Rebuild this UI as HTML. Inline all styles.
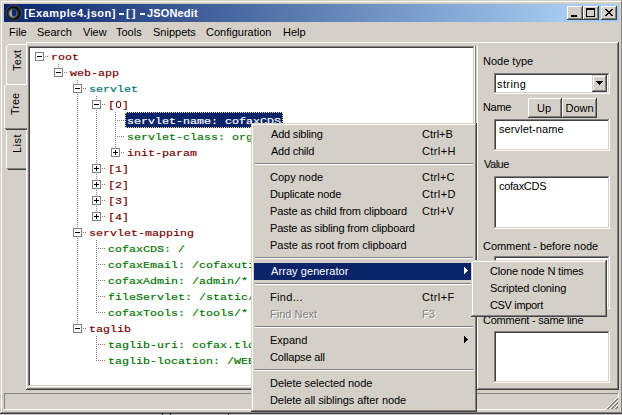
<!DOCTYPE html>
<html><head><meta charset="utf-8"><style>
html,body{margin:0;padding:0;width:622px;height:415px;overflow:hidden;background:#d4d0c8}
div,svg{position:absolute}
.t{font-family:"Liberation Sans",sans-serif;font-size:11px;line-height:13px;white-space:nowrap;color:#000}
.c{text-align:center}
.tt{font-family:"Liberation Sans",sans-serif;font-size:11px;font-weight:bold;line-height:13px;white-space:nowrap;color:#fff}
.m{font-family:"Liberation Mono",monospace;font-size:11.667px;letter-spacing:0px;font-weight:normal;-webkit-text-stroke:0.2px currentColor;line-height:16px;white-space:nowrap;transform:scaleY(0.84);transform-origin:0 11px}
.vt{font-family:"Liberation Sans",sans-serif;font-size:11px;line-height:13px;white-space:nowrap;color:#000;transform-origin:0 0;transform:rotate(-90deg)}
</style></head><body>
<div style="left:0px;top:0px;width:622px;height:415px;background:#d4d0c8;"></div><div style="left:0px;top:0px;width:621px;height:1px;background:#d4d0c8;"></div><div style="left:0px;top:0px;width:1px;height:413px;background:#d4d0c8;"></div><div style="left:1px;top:1px;width:620px;height:1px;background:#ffffff;"></div><div style="left:1px;top:1px;width:1px;height:411px;background:#ffffff;"></div><div style="left:0px;top:414px;width:622px;height:1px;background:#c8c8c8;"></div><div style="left:162px;top:414px;width:1px;height:1px;background:#000;"></div><div style="left:170px;top:414px;width:1px;height:1px;background:#000;"></div><div style="left:228px;top:414px;width:1px;height:1px;background:#000;"></div><div style="left:621px;top:0px;width:1px;height:414px;background:#808080;"></div><div style="left:0px;top:413px;width:622px;height:1px;background:#404040;"></div><div style="left:1px;top:412px;width:620px;height:1px;background:#808080;"></div><div style="left:4px;top:4px;width:615px;height:18px;background:linear-gradient(to right,#0a246a 0px,#a6caf0 563px,#a6caf0 615px);"></div><svg style="left:6px;top:5px" width="16" height="16" viewBox="0 0 16 16"><defs><radialGradient id="rg" gradientUnits="userSpaceOnUse" cx="7" cy="8.4" r="7.2"><stop offset="0" stop-color="#d0d0d0"/><stop offset="0.4" stop-color="#a8a8a8"/><stop offset="0.65" stop-color="#383838"/><stop offset="0.88" stop-color="#080808"/><stop offset="1" stop-color="#202020"/></radialGradient></defs><circle cx="8" cy="8" r="7.6" fill="none" stroke="#7a7a7a" stroke-width="0.6"/><path fill-rule="evenodd" fill="url(#rg)" d="M8 0.5A7.5 7.5 0 1 0 8 15.5A7.5 7.5 0 1 0 8 0.5ZM8.1 4A2.4 3.8 0 1 1 8.1 11.6A2.4 3.8 0 1 1 8.1 4Z"/></svg><div class="tt" style="left:24px;top:7px;letter-spacing:0.5px">[Example4.json]</div><div style="left:119px;top:13px;width:5px;height:2px;background:#fff;"></div><div style="left:140px;top:13px;width:5px;height:2px;background:#fff;"></div><div class="tt" style="left:126px;top:7px;letter-spacing:2px">[]</div><div class="tt" style="left:147px;top:7px;letter-spacing:0.15px">JSONedit</div><div style="left:567px;top:6px;width:16px;height:14px;background:#d4d0c8;"></div><div style="left:567px;top:6px;width:16px;height:1px;background:#ffffff;"></div><div style="left:567px;top:6px;width:1px;height:14px;background:#ffffff;"></div><div style="left:567px;top:19px;width:16px;height:1px;background:#404040;"></div><div style="left:582px;top:6px;width:1px;height:14px;background:#404040;"></div><div style="left:568px;top:18px;width:14px;height:1px;background:#808080;"></div><div style="left:581px;top:7px;width:1px;height:12px;background:#808080;"></div><div style="left:583px;top:6px;width:16px;height:14px;background:#d4d0c8;"></div><div style="left:583px;top:6px;width:16px;height:1px;background:#ffffff;"></div><div style="left:583px;top:6px;width:1px;height:14px;background:#ffffff;"></div><div style="left:583px;top:19px;width:16px;height:1px;background:#404040;"></div><div style="left:598px;top:6px;width:1px;height:14px;background:#404040;"></div><div style="left:584px;top:18px;width:14px;height:1px;background:#808080;"></div><div style="left:597px;top:7px;width:1px;height:12px;background:#808080;"></div><div style="left:601px;top:6px;width:16px;height:14px;background:#d4d0c8;"></div><div style="left:601px;top:6px;width:16px;height:1px;background:#ffffff;"></div><div style="left:601px;top:6px;width:1px;height:14px;background:#ffffff;"></div><div style="left:601px;top:19px;width:16px;height:1px;background:#404040;"></div><div style="left:616px;top:6px;width:1px;height:14px;background:#404040;"></div><div style="left:602px;top:18px;width:14px;height:1px;background:#808080;"></div><div style="left:615px;top:7px;width:1px;height:12px;background:#808080;"></div><div style="left:571px;top:15px;width:6px;height:2px;background:#000;"></div><div style="left:586px;top:8px;width:9px;height:9px;background:transparent;border:1px solid #000;border-top-width:2px;box-sizing:border-box"></div><div style="left:605px;top:9px;width:1px;height:1px;background:#000;"></div><div style="left:606px;top:9px;width:1px;height:1px;background:#000;"></div><div style="left:611px;top:9px;width:1px;height:1px;background:#000;"></div><div style="left:612px;top:9px;width:1px;height:1px;background:#000;"></div><div style="left:606px;top:10px;width:1px;height:1px;background:#000;"></div><div style="left:607px;top:10px;width:1px;height:1px;background:#000;"></div><div style="left:610px;top:10px;width:1px;height:1px;background:#000;"></div><div style="left:611px;top:10px;width:1px;height:1px;background:#000;"></div><div style="left:607px;top:11px;width:1px;height:1px;background:#000;"></div><div style="left:608px;top:11px;width:1px;height:1px;background:#000;"></div><div style="left:609px;top:11px;width:1px;height:1px;background:#000;"></div><div style="left:610px;top:11px;width:1px;height:1px;background:#000;"></div><div style="left:608px;top:12px;width:1px;height:1px;background:#000;"></div><div style="left:609px;top:12px;width:1px;height:1px;background:#000;"></div><div style="left:607px;top:13px;width:1px;height:1px;background:#000;"></div><div style="left:608px;top:13px;width:1px;height:1px;background:#000;"></div><div style="left:609px;top:13px;width:1px;height:1px;background:#000;"></div><div style="left:610px;top:13px;width:1px;height:1px;background:#000;"></div><div style="left:606px;top:14px;width:1px;height:1px;background:#000;"></div><div style="left:607px;top:14px;width:1px;height:1px;background:#000;"></div><div style="left:610px;top:14px;width:1px;height:1px;background:#000;"></div><div style="left:611px;top:14px;width:1px;height:1px;background:#000;"></div><div style="left:605px;top:15px;width:1px;height:1px;background:#000;"></div><div style="left:606px;top:15px;width:1px;height:1px;background:#000;"></div><div style="left:611px;top:15px;width:1px;height:1px;background:#000;"></div><div style="left:612px;top:15px;width:1px;height:1px;background:#000;"></div><div class="t" style="left:9px;top:26px;">File</div><div class="t" style="left:37px;top:26px;">Search</div><div class="t" style="left:83px;top:26px;">View</div><div class="t" style="left:116px;top:26px;">Tools</div><div class="t" style="left:153px;top:26px;">Snippets</div><div class="t" style="left:206px;top:26px;">Configuration</div><div class="t" style="left:283px;top:26px;">Help</div><div style="left:26px;top:42px;width:592px;height:1px;background:#ffffff;"></div><div style="left:26px;top:42px;width:1px;height:347px;background:#ffffff;"></div><div style="left:617px;top:43px;width:1px;height:346px;background:#808080;"></div><div style="left:618px;top:42px;width:1px;height:348px;background:#404040;"></div><div style="left:27px;top:388px;width:591px;height:1px;background:#808080;"></div><div style="left:26px;top:389px;width:593px;height:1px;background:#404040;"></div><div style="left:6px;top:44px;width:20px;height:42px;background:#d4d0c8;"></div><div style="left:8px;top:44px;width:18px;height:1px;background:#ffffff;"></div><div style="left:7px;top:45px;width:1px;height:1px;background:#ffffff;"></div><div style="left:6px;top:46px;width:1px;height:38px;background:#ffffff;"></div><div style="left:8px;top:84px;width:18px;height:1px;background:#808080;"></div><div style="left:8px;top:85px;width:18px;height:1px;background:#404040;"></div><div style="left:7px;top:84px;width:1px;height:1px;background:#808080;"></div><div style="left:6px;top:128px;width:20px;height:42px;background:#d4d0c8;"></div><div style="left:8px;top:128px;width:18px;height:1px;background:#ffffff;"></div><div style="left:7px;top:129px;width:1px;height:1px;background:#ffffff;"></div><div style="left:6px;top:130px;width:1px;height:38px;background:#ffffff;"></div><div style="left:8px;top:168px;width:18px;height:1px;background:#808080;"></div><div style="left:8px;top:169px;width:18px;height:1px;background:#404040;"></div><div style="left:7px;top:168px;width:1px;height:1px;background:#808080;"></div><div style="left:4px;top:84px;width:23px;height:46px;background:#d4d0c8;"></div><div style="left:6px;top:84px;width:20px;height:1px;background:#ffffff;"></div><div style="left:5px;top:85px;width:1px;height:1px;background:#ffffff;"></div><div style="left:4px;top:86px;width:1px;height:42px;background:#ffffff;"></div><div style="left:6px;top:128px;width:21px;height:1px;background:#808080;"></div><div style="left:6px;top:129px;width:21px;height:1px;background:#404040;"></div><div style="left:5px;top:128px;width:1px;height:1px;background:#808080;"></div><div style="left:26px;top:85px;width:1px;height:43px;background:#d4d0c8;"></div><div class="vt" style="left:11px;top:71px;letter-spacing:0.3px">Text</div><div class="vt" style="left:9px;top:115px">Tree</div><div class="vt" style="left:11px;top:153px;letter-spacing:0.5px">List</div><div style="left:28px;top:46px;width:447px;height:341px;background:#ffffff;"></div><div style="left:28px;top:46px;width:447px;height:1px;background:#808080;"></div><div style="left:28px;top:46px;width:1px;height:341px;background:#808080;"></div><div style="left:29px;top:47px;width:445px;height:1px;background:#404040;"></div><div style="left:29px;top:47px;width:1px;height:339px;background:#404040;"></div><div style="left:28px;top:386px;width:447px;height:1px;background:#ffffff;"></div><div style="left:474px;top:46px;width:1px;height:341px;background:#ffffff;"></div><div style="left:29px;top:385px;width:445px;height:1px;background:#d4d0c8;"></div><div style="left:473px;top:47px;width:1px;height:339px;background:#d4d0c8;"></div><div style="left:475px;top:46px;width:1px;height:343px;background:#808080;"></div><div style="left:477px;top:46px;width:1px;height:343px;background:#ffffff;"></div><div style="left:30px;top:48px;width:443px;height:337px;overflow:hidden"><div style="left:-30px;top:-48px;width:622px;height:415px"><div style="left:39px;top:56px;width:1px;height:1px;background:#808080"></div><div style="left:41px;top:56px;width:1px;height:1px;background:#808080"></div><div style="left:43px;top:56px;width:1px;height:1px;background:#808080"></div><div style="left:45px;top:56px;width:1px;height:1px;background:#808080"></div><div style="left:47px;top:56px;width:1px;height:1px;background:#808080"></div><div style="left:58px;top:72px;width:1px;height:1px;background:#808080"></div><div style="left:60px;top:72px;width:1px;height:1px;background:#808080"></div><div style="left:62px;top:72px;width:1px;height:1px;background:#808080"></div><div style="left:64px;top:72px;width:1px;height:1px;background:#808080"></div><div style="left:66px;top:72px;width:1px;height:1px;background:#808080"></div><div style="left:58px;top:64px;width:1px;height:1px;background:#808080"></div><div style="left:58px;top:66px;width:1px;height:1px;background:#808080"></div><div style="left:58px;top:68px;width:1px;height:1px;background:#808080"></div><div style="left:58px;top:70px;width:1px;height:1px;background:#808080"></div><div style="left:58px;top:72px;width:1px;height:1px;background:#808080"></div><div style="left:77px;top:88px;width:1px;height:1px;background:#808080"></div><div style="left:79px;top:88px;width:1px;height:1px;background:#808080"></div><div style="left:81px;top:88px;width:1px;height:1px;background:#808080"></div><div style="left:83px;top:88px;width:1px;height:1px;background:#808080"></div><div style="left:85px;top:88px;width:1px;height:1px;background:#808080"></div><div style="left:77px;top:80px;width:1px;height:1px;background:#808080"></div><div style="left:77px;top:82px;width:1px;height:1px;background:#808080"></div><div style="left:77px;top:84px;width:1px;height:1px;background:#808080"></div><div style="left:77px;top:86px;width:1px;height:1px;background:#808080"></div><div style="left:77px;top:88px;width:1px;height:1px;background:#808080"></div><div style="left:77px;top:90px;width:1px;height:1px;background:#808080"></div><div style="left:77px;top:92px;width:1px;height:1px;background:#808080"></div><div style="left:77px;top:94px;width:1px;height:1px;background:#808080"></div><div style="left:96px;top:104px;width:1px;height:1px;background:#808080"></div><div style="left:98px;top:104px;width:1px;height:1px;background:#808080"></div><div style="left:100px;top:104px;width:1px;height:1px;background:#808080"></div><div style="left:102px;top:104px;width:1px;height:1px;background:#808080"></div><div style="left:104px;top:104px;width:1px;height:1px;background:#808080"></div><div style="left:96px;top:96px;width:1px;height:1px;background:#808080"></div><div style="left:96px;top:98px;width:1px;height:1px;background:#808080"></div><div style="left:96px;top:100px;width:1px;height:1px;background:#808080"></div><div style="left:96px;top:102px;width:1px;height:1px;background:#808080"></div><div style="left:96px;top:104px;width:1px;height:1px;background:#808080"></div><div style="left:96px;top:106px;width:1px;height:1px;background:#808080"></div><div style="left:96px;top:108px;width:1px;height:1px;background:#808080"></div><div style="left:96px;top:110px;width:1px;height:1px;background:#808080"></div><div style="left:77px;top:96px;width:1px;height:1px;background:#808080"></div><div style="left:77px;top:98px;width:1px;height:1px;background:#808080"></div><div style="left:77px;top:100px;width:1px;height:1px;background:#808080"></div><div style="left:77px;top:102px;width:1px;height:1px;background:#808080"></div><div style="left:77px;top:104px;width:1px;height:1px;background:#808080"></div><div style="left:77px;top:106px;width:1px;height:1px;background:#808080"></div><div style="left:77px;top:108px;width:1px;height:1px;background:#808080"></div><div style="left:77px;top:110px;width:1px;height:1px;background:#808080"></div><div style="left:115px;top:120px;width:1px;height:1px;background:#808080"></div><div style="left:117px;top:120px;width:1px;height:1px;background:#808080"></div><div style="left:119px;top:120px;width:1px;height:1px;background:#808080"></div><div style="left:121px;top:120px;width:1px;height:1px;background:#808080"></div><div style="left:123px;top:120px;width:1px;height:1px;background:#808080"></div><div style="left:115px;top:112px;width:1px;height:1px;background:#808080"></div><div style="left:115px;top:114px;width:1px;height:1px;background:#808080"></div><div style="left:115px;top:116px;width:1px;height:1px;background:#808080"></div><div style="left:115px;top:118px;width:1px;height:1px;background:#808080"></div><div style="left:115px;top:120px;width:1px;height:1px;background:#808080"></div><div style="left:115px;top:122px;width:1px;height:1px;background:#808080"></div><div style="left:115px;top:124px;width:1px;height:1px;background:#808080"></div><div style="left:115px;top:126px;width:1px;height:1px;background:#808080"></div><div style="left:77px;top:112px;width:1px;height:1px;background:#808080"></div><div style="left:77px;top:114px;width:1px;height:1px;background:#808080"></div><div style="left:77px;top:116px;width:1px;height:1px;background:#808080"></div><div style="left:77px;top:118px;width:1px;height:1px;background:#808080"></div><div style="left:77px;top:120px;width:1px;height:1px;background:#808080"></div><div style="left:77px;top:122px;width:1px;height:1px;background:#808080"></div><div style="left:77px;top:124px;width:1px;height:1px;background:#808080"></div><div style="left:77px;top:126px;width:1px;height:1px;background:#808080"></div><div style="left:96px;top:112px;width:1px;height:1px;background:#808080"></div><div style="left:96px;top:114px;width:1px;height:1px;background:#808080"></div><div style="left:96px;top:116px;width:1px;height:1px;background:#808080"></div><div style="left:96px;top:118px;width:1px;height:1px;background:#808080"></div><div style="left:96px;top:120px;width:1px;height:1px;background:#808080"></div><div style="left:96px;top:122px;width:1px;height:1px;background:#808080"></div><div style="left:96px;top:124px;width:1px;height:1px;background:#808080"></div><div style="left:96px;top:126px;width:1px;height:1px;background:#808080"></div><div style="left:115px;top:136px;width:1px;height:1px;background:#808080"></div><div style="left:117px;top:136px;width:1px;height:1px;background:#808080"></div><div style="left:119px;top:136px;width:1px;height:1px;background:#808080"></div><div style="left:121px;top:136px;width:1px;height:1px;background:#808080"></div><div style="left:123px;top:136px;width:1px;height:1px;background:#808080"></div><div style="left:115px;top:128px;width:1px;height:1px;background:#808080"></div><div style="left:115px;top:130px;width:1px;height:1px;background:#808080"></div><div style="left:115px;top:132px;width:1px;height:1px;background:#808080"></div><div style="left:115px;top:134px;width:1px;height:1px;background:#808080"></div><div style="left:115px;top:136px;width:1px;height:1px;background:#808080"></div><div style="left:115px;top:138px;width:1px;height:1px;background:#808080"></div><div style="left:115px;top:140px;width:1px;height:1px;background:#808080"></div><div style="left:115px;top:142px;width:1px;height:1px;background:#808080"></div><div style="left:77px;top:128px;width:1px;height:1px;background:#808080"></div><div style="left:77px;top:130px;width:1px;height:1px;background:#808080"></div><div style="left:77px;top:132px;width:1px;height:1px;background:#808080"></div><div style="left:77px;top:134px;width:1px;height:1px;background:#808080"></div><div style="left:77px;top:136px;width:1px;height:1px;background:#808080"></div><div style="left:77px;top:138px;width:1px;height:1px;background:#808080"></div><div style="left:77px;top:140px;width:1px;height:1px;background:#808080"></div><div style="left:77px;top:142px;width:1px;height:1px;background:#808080"></div><div style="left:96px;top:128px;width:1px;height:1px;background:#808080"></div><div style="left:96px;top:130px;width:1px;height:1px;background:#808080"></div><div style="left:96px;top:132px;width:1px;height:1px;background:#808080"></div><div style="left:96px;top:134px;width:1px;height:1px;background:#808080"></div><div style="left:96px;top:136px;width:1px;height:1px;background:#808080"></div><div style="left:96px;top:138px;width:1px;height:1px;background:#808080"></div><div style="left:96px;top:140px;width:1px;height:1px;background:#808080"></div><div style="left:96px;top:142px;width:1px;height:1px;background:#808080"></div><div style="left:115px;top:152px;width:1px;height:1px;background:#808080"></div><div style="left:117px;top:152px;width:1px;height:1px;background:#808080"></div><div style="left:119px;top:152px;width:1px;height:1px;background:#808080"></div><div style="left:121px;top:152px;width:1px;height:1px;background:#808080"></div><div style="left:123px;top:152px;width:1px;height:1px;background:#808080"></div><div style="left:115px;top:144px;width:1px;height:1px;background:#808080"></div><div style="left:115px;top:146px;width:1px;height:1px;background:#808080"></div><div style="left:115px;top:148px;width:1px;height:1px;background:#808080"></div><div style="left:115px;top:150px;width:1px;height:1px;background:#808080"></div><div style="left:115px;top:152px;width:1px;height:1px;background:#808080"></div><div style="left:77px;top:144px;width:1px;height:1px;background:#808080"></div><div style="left:77px;top:146px;width:1px;height:1px;background:#808080"></div><div style="left:77px;top:148px;width:1px;height:1px;background:#808080"></div><div style="left:77px;top:150px;width:1px;height:1px;background:#808080"></div><div style="left:77px;top:152px;width:1px;height:1px;background:#808080"></div><div style="left:77px;top:154px;width:1px;height:1px;background:#808080"></div><div style="left:77px;top:156px;width:1px;height:1px;background:#808080"></div><div style="left:77px;top:158px;width:1px;height:1px;background:#808080"></div><div style="left:96px;top:144px;width:1px;height:1px;background:#808080"></div><div style="left:96px;top:146px;width:1px;height:1px;background:#808080"></div><div style="left:96px;top:148px;width:1px;height:1px;background:#808080"></div><div style="left:96px;top:150px;width:1px;height:1px;background:#808080"></div><div style="left:96px;top:152px;width:1px;height:1px;background:#808080"></div><div style="left:96px;top:154px;width:1px;height:1px;background:#808080"></div><div style="left:96px;top:156px;width:1px;height:1px;background:#808080"></div><div style="left:96px;top:158px;width:1px;height:1px;background:#808080"></div><div style="left:96px;top:168px;width:1px;height:1px;background:#808080"></div><div style="left:98px;top:168px;width:1px;height:1px;background:#808080"></div><div style="left:100px;top:168px;width:1px;height:1px;background:#808080"></div><div style="left:102px;top:168px;width:1px;height:1px;background:#808080"></div><div style="left:104px;top:168px;width:1px;height:1px;background:#808080"></div><div style="left:96px;top:160px;width:1px;height:1px;background:#808080"></div><div style="left:96px;top:162px;width:1px;height:1px;background:#808080"></div><div style="left:96px;top:164px;width:1px;height:1px;background:#808080"></div><div style="left:96px;top:166px;width:1px;height:1px;background:#808080"></div><div style="left:96px;top:168px;width:1px;height:1px;background:#808080"></div><div style="left:96px;top:170px;width:1px;height:1px;background:#808080"></div><div style="left:96px;top:172px;width:1px;height:1px;background:#808080"></div><div style="left:96px;top:174px;width:1px;height:1px;background:#808080"></div><div style="left:77px;top:160px;width:1px;height:1px;background:#808080"></div><div style="left:77px;top:162px;width:1px;height:1px;background:#808080"></div><div style="left:77px;top:164px;width:1px;height:1px;background:#808080"></div><div style="left:77px;top:166px;width:1px;height:1px;background:#808080"></div><div style="left:77px;top:168px;width:1px;height:1px;background:#808080"></div><div style="left:77px;top:170px;width:1px;height:1px;background:#808080"></div><div style="left:77px;top:172px;width:1px;height:1px;background:#808080"></div><div style="left:77px;top:174px;width:1px;height:1px;background:#808080"></div><div style="left:96px;top:184px;width:1px;height:1px;background:#808080"></div><div style="left:98px;top:184px;width:1px;height:1px;background:#808080"></div><div style="left:100px;top:184px;width:1px;height:1px;background:#808080"></div><div style="left:102px;top:184px;width:1px;height:1px;background:#808080"></div><div style="left:104px;top:184px;width:1px;height:1px;background:#808080"></div><div style="left:96px;top:176px;width:1px;height:1px;background:#808080"></div><div style="left:96px;top:178px;width:1px;height:1px;background:#808080"></div><div style="left:96px;top:180px;width:1px;height:1px;background:#808080"></div><div style="left:96px;top:182px;width:1px;height:1px;background:#808080"></div><div style="left:96px;top:184px;width:1px;height:1px;background:#808080"></div><div style="left:96px;top:186px;width:1px;height:1px;background:#808080"></div><div style="left:96px;top:188px;width:1px;height:1px;background:#808080"></div><div style="left:96px;top:190px;width:1px;height:1px;background:#808080"></div><div style="left:77px;top:176px;width:1px;height:1px;background:#808080"></div><div style="left:77px;top:178px;width:1px;height:1px;background:#808080"></div><div style="left:77px;top:180px;width:1px;height:1px;background:#808080"></div><div style="left:77px;top:182px;width:1px;height:1px;background:#808080"></div><div style="left:77px;top:184px;width:1px;height:1px;background:#808080"></div><div style="left:77px;top:186px;width:1px;height:1px;background:#808080"></div><div style="left:77px;top:188px;width:1px;height:1px;background:#808080"></div><div style="left:77px;top:190px;width:1px;height:1px;background:#808080"></div><div style="left:96px;top:200px;width:1px;height:1px;background:#808080"></div><div style="left:98px;top:200px;width:1px;height:1px;background:#808080"></div><div style="left:100px;top:200px;width:1px;height:1px;background:#808080"></div><div style="left:102px;top:200px;width:1px;height:1px;background:#808080"></div><div style="left:104px;top:200px;width:1px;height:1px;background:#808080"></div><div style="left:96px;top:192px;width:1px;height:1px;background:#808080"></div><div style="left:96px;top:194px;width:1px;height:1px;background:#808080"></div><div style="left:96px;top:196px;width:1px;height:1px;background:#808080"></div><div style="left:96px;top:198px;width:1px;height:1px;background:#808080"></div><div style="left:96px;top:200px;width:1px;height:1px;background:#808080"></div><div style="left:96px;top:202px;width:1px;height:1px;background:#808080"></div><div style="left:96px;top:204px;width:1px;height:1px;background:#808080"></div><div style="left:96px;top:206px;width:1px;height:1px;background:#808080"></div><div style="left:77px;top:192px;width:1px;height:1px;background:#808080"></div><div style="left:77px;top:194px;width:1px;height:1px;background:#808080"></div><div style="left:77px;top:196px;width:1px;height:1px;background:#808080"></div><div style="left:77px;top:198px;width:1px;height:1px;background:#808080"></div><div style="left:77px;top:200px;width:1px;height:1px;background:#808080"></div><div style="left:77px;top:202px;width:1px;height:1px;background:#808080"></div><div style="left:77px;top:204px;width:1px;height:1px;background:#808080"></div><div style="left:77px;top:206px;width:1px;height:1px;background:#808080"></div><div style="left:96px;top:216px;width:1px;height:1px;background:#808080"></div><div style="left:98px;top:216px;width:1px;height:1px;background:#808080"></div><div style="left:100px;top:216px;width:1px;height:1px;background:#808080"></div><div style="left:102px;top:216px;width:1px;height:1px;background:#808080"></div><div style="left:104px;top:216px;width:1px;height:1px;background:#808080"></div><div style="left:96px;top:208px;width:1px;height:1px;background:#808080"></div><div style="left:96px;top:210px;width:1px;height:1px;background:#808080"></div><div style="left:96px;top:212px;width:1px;height:1px;background:#808080"></div><div style="left:96px;top:214px;width:1px;height:1px;background:#808080"></div><div style="left:96px;top:216px;width:1px;height:1px;background:#808080"></div><div style="left:77px;top:208px;width:1px;height:1px;background:#808080"></div><div style="left:77px;top:210px;width:1px;height:1px;background:#808080"></div><div style="left:77px;top:212px;width:1px;height:1px;background:#808080"></div><div style="left:77px;top:214px;width:1px;height:1px;background:#808080"></div><div style="left:77px;top:216px;width:1px;height:1px;background:#808080"></div><div style="left:77px;top:218px;width:1px;height:1px;background:#808080"></div><div style="left:77px;top:220px;width:1px;height:1px;background:#808080"></div><div style="left:77px;top:222px;width:1px;height:1px;background:#808080"></div><div style="left:77px;top:232px;width:1px;height:1px;background:#808080"></div><div style="left:79px;top:232px;width:1px;height:1px;background:#808080"></div><div style="left:81px;top:232px;width:1px;height:1px;background:#808080"></div><div style="left:83px;top:232px;width:1px;height:1px;background:#808080"></div><div style="left:85px;top:232px;width:1px;height:1px;background:#808080"></div><div style="left:77px;top:224px;width:1px;height:1px;background:#808080"></div><div style="left:77px;top:226px;width:1px;height:1px;background:#808080"></div><div style="left:77px;top:228px;width:1px;height:1px;background:#808080"></div><div style="left:77px;top:230px;width:1px;height:1px;background:#808080"></div><div style="left:77px;top:232px;width:1px;height:1px;background:#808080"></div><div style="left:77px;top:234px;width:1px;height:1px;background:#808080"></div><div style="left:77px;top:236px;width:1px;height:1px;background:#808080"></div><div style="left:77px;top:238px;width:1px;height:1px;background:#808080"></div><div style="left:96px;top:248px;width:1px;height:1px;background:#808080"></div><div style="left:98px;top:248px;width:1px;height:1px;background:#808080"></div><div style="left:100px;top:248px;width:1px;height:1px;background:#808080"></div><div style="left:102px;top:248px;width:1px;height:1px;background:#808080"></div><div style="left:104px;top:248px;width:1px;height:1px;background:#808080"></div><div style="left:96px;top:240px;width:1px;height:1px;background:#808080"></div><div style="left:96px;top:242px;width:1px;height:1px;background:#808080"></div><div style="left:96px;top:244px;width:1px;height:1px;background:#808080"></div><div style="left:96px;top:246px;width:1px;height:1px;background:#808080"></div><div style="left:96px;top:248px;width:1px;height:1px;background:#808080"></div><div style="left:96px;top:250px;width:1px;height:1px;background:#808080"></div><div style="left:96px;top:252px;width:1px;height:1px;background:#808080"></div><div style="left:96px;top:254px;width:1px;height:1px;background:#808080"></div><div style="left:77px;top:240px;width:1px;height:1px;background:#808080"></div><div style="left:77px;top:242px;width:1px;height:1px;background:#808080"></div><div style="left:77px;top:244px;width:1px;height:1px;background:#808080"></div><div style="left:77px;top:246px;width:1px;height:1px;background:#808080"></div><div style="left:77px;top:248px;width:1px;height:1px;background:#808080"></div><div style="left:77px;top:250px;width:1px;height:1px;background:#808080"></div><div style="left:77px;top:252px;width:1px;height:1px;background:#808080"></div><div style="left:77px;top:254px;width:1px;height:1px;background:#808080"></div><div style="left:96px;top:264px;width:1px;height:1px;background:#808080"></div><div style="left:98px;top:264px;width:1px;height:1px;background:#808080"></div><div style="left:100px;top:264px;width:1px;height:1px;background:#808080"></div><div style="left:102px;top:264px;width:1px;height:1px;background:#808080"></div><div style="left:104px;top:264px;width:1px;height:1px;background:#808080"></div><div style="left:96px;top:256px;width:1px;height:1px;background:#808080"></div><div style="left:96px;top:258px;width:1px;height:1px;background:#808080"></div><div style="left:96px;top:260px;width:1px;height:1px;background:#808080"></div><div style="left:96px;top:262px;width:1px;height:1px;background:#808080"></div><div style="left:96px;top:264px;width:1px;height:1px;background:#808080"></div><div style="left:96px;top:266px;width:1px;height:1px;background:#808080"></div><div style="left:96px;top:268px;width:1px;height:1px;background:#808080"></div><div style="left:96px;top:270px;width:1px;height:1px;background:#808080"></div><div style="left:77px;top:256px;width:1px;height:1px;background:#808080"></div><div style="left:77px;top:258px;width:1px;height:1px;background:#808080"></div><div style="left:77px;top:260px;width:1px;height:1px;background:#808080"></div><div style="left:77px;top:262px;width:1px;height:1px;background:#808080"></div><div style="left:77px;top:264px;width:1px;height:1px;background:#808080"></div><div style="left:77px;top:266px;width:1px;height:1px;background:#808080"></div><div style="left:77px;top:268px;width:1px;height:1px;background:#808080"></div><div style="left:77px;top:270px;width:1px;height:1px;background:#808080"></div><div style="left:96px;top:280px;width:1px;height:1px;background:#808080"></div><div style="left:98px;top:280px;width:1px;height:1px;background:#808080"></div><div style="left:100px;top:280px;width:1px;height:1px;background:#808080"></div><div style="left:102px;top:280px;width:1px;height:1px;background:#808080"></div><div style="left:104px;top:280px;width:1px;height:1px;background:#808080"></div><div style="left:96px;top:272px;width:1px;height:1px;background:#808080"></div><div style="left:96px;top:274px;width:1px;height:1px;background:#808080"></div><div style="left:96px;top:276px;width:1px;height:1px;background:#808080"></div><div style="left:96px;top:278px;width:1px;height:1px;background:#808080"></div><div style="left:96px;top:280px;width:1px;height:1px;background:#808080"></div><div style="left:96px;top:282px;width:1px;height:1px;background:#808080"></div><div style="left:96px;top:284px;width:1px;height:1px;background:#808080"></div><div style="left:96px;top:286px;width:1px;height:1px;background:#808080"></div><div style="left:77px;top:272px;width:1px;height:1px;background:#808080"></div><div style="left:77px;top:274px;width:1px;height:1px;background:#808080"></div><div style="left:77px;top:276px;width:1px;height:1px;background:#808080"></div><div style="left:77px;top:278px;width:1px;height:1px;background:#808080"></div><div style="left:77px;top:280px;width:1px;height:1px;background:#808080"></div><div style="left:77px;top:282px;width:1px;height:1px;background:#808080"></div><div style="left:77px;top:284px;width:1px;height:1px;background:#808080"></div><div style="left:77px;top:286px;width:1px;height:1px;background:#808080"></div><div style="left:96px;top:296px;width:1px;height:1px;background:#808080"></div><div style="left:98px;top:296px;width:1px;height:1px;background:#808080"></div><div style="left:100px;top:296px;width:1px;height:1px;background:#808080"></div><div style="left:102px;top:296px;width:1px;height:1px;background:#808080"></div><div style="left:104px;top:296px;width:1px;height:1px;background:#808080"></div><div style="left:96px;top:288px;width:1px;height:1px;background:#808080"></div><div style="left:96px;top:290px;width:1px;height:1px;background:#808080"></div><div style="left:96px;top:292px;width:1px;height:1px;background:#808080"></div><div style="left:96px;top:294px;width:1px;height:1px;background:#808080"></div><div style="left:96px;top:296px;width:1px;height:1px;background:#808080"></div><div style="left:96px;top:298px;width:1px;height:1px;background:#808080"></div><div style="left:96px;top:300px;width:1px;height:1px;background:#808080"></div><div style="left:96px;top:302px;width:1px;height:1px;background:#808080"></div><div style="left:77px;top:288px;width:1px;height:1px;background:#808080"></div><div style="left:77px;top:290px;width:1px;height:1px;background:#808080"></div><div style="left:77px;top:292px;width:1px;height:1px;background:#808080"></div><div style="left:77px;top:294px;width:1px;height:1px;background:#808080"></div><div style="left:77px;top:296px;width:1px;height:1px;background:#808080"></div><div style="left:77px;top:298px;width:1px;height:1px;background:#808080"></div><div style="left:77px;top:300px;width:1px;height:1px;background:#808080"></div><div style="left:77px;top:302px;width:1px;height:1px;background:#808080"></div><div style="left:96px;top:312px;width:1px;height:1px;background:#808080"></div><div style="left:98px;top:312px;width:1px;height:1px;background:#808080"></div><div style="left:100px;top:312px;width:1px;height:1px;background:#808080"></div><div style="left:102px;top:312px;width:1px;height:1px;background:#808080"></div><div style="left:104px;top:312px;width:1px;height:1px;background:#808080"></div><div style="left:96px;top:304px;width:1px;height:1px;background:#808080"></div><div style="left:96px;top:306px;width:1px;height:1px;background:#808080"></div><div style="left:96px;top:308px;width:1px;height:1px;background:#808080"></div><div style="left:96px;top:310px;width:1px;height:1px;background:#808080"></div><div style="left:96px;top:312px;width:1px;height:1px;background:#808080"></div><div style="left:77px;top:304px;width:1px;height:1px;background:#808080"></div><div style="left:77px;top:306px;width:1px;height:1px;background:#808080"></div><div style="left:77px;top:308px;width:1px;height:1px;background:#808080"></div><div style="left:77px;top:310px;width:1px;height:1px;background:#808080"></div><div style="left:77px;top:312px;width:1px;height:1px;background:#808080"></div><div style="left:77px;top:314px;width:1px;height:1px;background:#808080"></div><div style="left:77px;top:316px;width:1px;height:1px;background:#808080"></div><div style="left:77px;top:318px;width:1px;height:1px;background:#808080"></div><div style="left:77px;top:328px;width:1px;height:1px;background:#808080"></div><div style="left:79px;top:328px;width:1px;height:1px;background:#808080"></div><div style="left:81px;top:328px;width:1px;height:1px;background:#808080"></div><div style="left:83px;top:328px;width:1px;height:1px;background:#808080"></div><div style="left:85px;top:328px;width:1px;height:1px;background:#808080"></div><div style="left:77px;top:320px;width:1px;height:1px;background:#808080"></div><div style="left:77px;top:322px;width:1px;height:1px;background:#808080"></div><div style="left:77px;top:324px;width:1px;height:1px;background:#808080"></div><div style="left:77px;top:326px;width:1px;height:1px;background:#808080"></div><div style="left:77px;top:328px;width:1px;height:1px;background:#808080"></div><div style="left:96px;top:344px;width:1px;height:1px;background:#808080"></div><div style="left:98px;top:344px;width:1px;height:1px;background:#808080"></div><div style="left:100px;top:344px;width:1px;height:1px;background:#808080"></div><div style="left:102px;top:344px;width:1px;height:1px;background:#808080"></div><div style="left:104px;top:344px;width:1px;height:1px;background:#808080"></div><div style="left:96px;top:336px;width:1px;height:1px;background:#808080"></div><div style="left:96px;top:338px;width:1px;height:1px;background:#808080"></div><div style="left:96px;top:340px;width:1px;height:1px;background:#808080"></div><div style="left:96px;top:342px;width:1px;height:1px;background:#808080"></div><div style="left:96px;top:344px;width:1px;height:1px;background:#808080"></div><div style="left:96px;top:346px;width:1px;height:1px;background:#808080"></div><div style="left:96px;top:348px;width:1px;height:1px;background:#808080"></div><div style="left:96px;top:350px;width:1px;height:1px;background:#808080"></div><div style="left:96px;top:360px;width:1px;height:1px;background:#808080"></div><div style="left:98px;top:360px;width:1px;height:1px;background:#808080"></div><div style="left:100px;top:360px;width:1px;height:1px;background:#808080"></div><div style="left:102px;top:360px;width:1px;height:1px;background:#808080"></div><div style="left:104px;top:360px;width:1px;height:1px;background:#808080"></div><div style="left:96px;top:352px;width:1px;height:1px;background:#808080"></div><div style="left:96px;top:354px;width:1px;height:1px;background:#808080"></div><div style="left:96px;top:356px;width:1px;height:1px;background:#808080"></div><div style="left:96px;top:358px;width:1px;height:1px;background:#808080"></div><div style="left:96px;top:360px;width:1px;height:1px;background:#808080"></div><div style="left:35px;top:52px;width:9px;height:9px;box-sizing:border-box;border:1px solid #808080;background:#fff"></div><div style="left:37px;top:56px;width:5px;height:1px;background:#000"></div><div class="m" style="left:51px;top:49px;color:#780000">root</div><div style="left:54px;top:68px;width:9px;height:9px;box-sizing:border-box;border:1px solid #808080;background:#fff"></div><div style="left:56px;top:72px;width:5px;height:1px;background:#000"></div><div class="m" style="left:70px;top:65px;color:#780000">web-app</div><div style="left:73px;top:84px;width:9px;height:9px;box-sizing:border-box;border:1px solid #808080;background:#fff"></div><div style="left:75px;top:88px;width:5px;height:1px;background:#000"></div><div class="m" style="left:89px;top:81px;color:#007474">servlet</div><div style="left:92px;top:100px;width:9px;height:9px;box-sizing:border-box;border:1px solid #808080;background:#fff"></div><div style="left:94px;top:104px;width:5px;height:1px;background:#000"></div><div class="m" style="left:108px;top:97px;color:#780000">[&nbsp;]</div><div style="left:125px;top:112px;width:158px;height:16px;background:#0a246a"></div><div class="m" style="left:127px;top:113px;color:#fff">servlet-name: cofaxCDS</div><div style="left:125px;top:112px;width:158px;height:16px;box-sizing:border-box;border:1px dotted #f5db95"></div><div class="m" style="left:127px;top:129px;color:#007400">servlet-class: org.cofax.cds.CDSServlet</div><div style="left:111px;top:148px;width:9px;height:9px;box-sizing:border-box;border:1px solid #808080;background:#fff"></div><div style="left:113px;top:152px;width:5px;height:1px;background:#000"></div><div style="left:115px;top:150px;width:1px;height:5px;background:#000"></div><div class="m" style="left:127px;top:145px;color:#780000">init-param</div><div style="left:92px;top:164px;width:9px;height:9px;box-sizing:border-box;border:1px solid #808080;background:#fff"></div><div style="left:94px;top:168px;width:5px;height:1px;background:#000"></div><div style="left:96px;top:166px;width:1px;height:5px;background:#000"></div><div class="m" style="left:108px;top:161px;color:#780000">[1]</div><div style="left:92px;top:180px;width:9px;height:9px;box-sizing:border-box;border:1px solid #808080;background:#fff"></div><div style="left:94px;top:184px;width:5px;height:1px;background:#000"></div><div style="left:96px;top:182px;width:1px;height:5px;background:#000"></div><div class="m" style="left:108px;top:177px;color:#780000">[2]</div><div style="left:92px;top:196px;width:9px;height:9px;box-sizing:border-box;border:1px solid #808080;background:#fff"></div><div style="left:94px;top:200px;width:5px;height:1px;background:#000"></div><div style="left:96px;top:198px;width:1px;height:5px;background:#000"></div><div class="m" style="left:108px;top:193px;color:#780000">[3]</div><div style="left:92px;top:212px;width:9px;height:9px;box-sizing:border-box;border:1px solid #808080;background:#fff"></div><div style="left:94px;top:216px;width:5px;height:1px;background:#000"></div><div style="left:96px;top:214px;width:1px;height:5px;background:#000"></div><div class="m" style="left:108px;top:209px;color:#780000">[4]</div><div style="left:73px;top:228px;width:9px;height:9px;box-sizing:border-box;border:1px solid #808080;background:#fff"></div><div style="left:75px;top:232px;width:5px;height:1px;background:#000"></div><div class="m" style="left:89px;top:225px;color:#780000">servlet-mapping</div><div class="m" style="left:108px;top:241px;color:#007400">cofaxCDS: /</div><div class="m" style="left:108px;top:257px;color:#007400">cofaxEmail: /cofaxutil/aemail/*</div><div class="m" style="left:108px;top:273px;color:#007400">cofaxAdmin: /admin/*</div><div class="m" style="left:108px;top:289px;color:#007400">fileServlet: /static/*</div><div class="m" style="left:108px;top:305px;color:#007400">cofaxTools: /tools/*</div><div style="left:73px;top:324px;width:9px;height:9px;box-sizing:border-box;border:1px solid #808080;background:#fff"></div><div style="left:75px;top:328px;width:5px;height:1px;background:#000"></div><div class="m" style="left:89px;top:321px;color:#780000">taglib</div><div class="m" style="left:108px;top:337px;color:#007400">taglib-uri: cofax.tld</div><div class="m" style="left:108px;top:353px;color:#007400">taglib-location: /WEB-INF/tlds/cofax.tld</div><div style="left:116px;top:101px;width:5px;height:7px;box-sizing:border-box;border:1.4px solid #780000;border-radius:2px"></div></div></div><div class="t" style="left:483px;top:55px;">Node type</div><div style="left:494px;top:73px;width:116px;height:21px;background:#ffffff;"></div><div style="left:494px;top:73px;width:116px;height:1px;background:#808080;"></div><div style="left:494px;top:73px;width:1px;height:21px;background:#808080;"></div><div style="left:495px;top:74px;width:114px;height:1px;background:#404040;"></div><div style="left:495px;top:74px;width:1px;height:19px;background:#404040;"></div><div style="left:494px;top:93px;width:116px;height:1px;background:#ffffff;"></div><div style="left:609px;top:73px;width:1px;height:21px;background:#ffffff;"></div><div style="left:495px;top:92px;width:114px;height:1px;background:#d4d0c8;"></div><div style="left:608px;top:74px;width:1px;height:19px;background:#d4d0c8;"></div><div class="t" style="left:497px;top:78px;letter-spacing:0.400px;">string</div><div style="left:592px;top:75px;width:15px;height:17px;background:#d4d0c8;"></div><div style="left:592px;top:75px;width:15px;height:1px;background:#d4d0c8;"></div><div style="left:592px;top:75px;width:1px;height:17px;background:#d4d0c8;"></div><div style="left:593px;top:76px;width:13px;height:1px;background:#ffffff;"></div><div style="left:593px;top:76px;width:1px;height:15px;background:#ffffff;"></div><div style="left:592px;top:91px;width:15px;height:1px;background:#404040;"></div><div style="left:606px;top:75px;width:1px;height:17px;background:#404040;"></div><div style="left:593px;top:90px;width:13px;height:1px;background:#808080;"></div><div style="left:605px;top:76px;width:1px;height:15px;background:#808080;"></div><div style="left:596px;top:81px;width:7px;height:1px;background:#000;"></div><div style="left:597px;top:82px;width:5px;height:1px;background:#000;"></div><div style="left:598px;top:83px;width:3px;height:1px;background:#000;"></div><div style="left:599px;top:84px;width:1px;height:1px;background:#000;"></div><div class="t" style="left:483px;top:101px;letter-spacing:-0.333px;">Name</div><div style="left:528px;top:98px;width:34px;height:20px;background:#d4d0c8;"></div><div style="left:528px;top:98px;width:34px;height:1px;background:#ffffff;"></div><div style="left:528px;top:98px;width:1px;height:20px;background:#ffffff;"></div><div style="left:528px;top:117px;width:34px;height:1px;background:#404040;"></div><div style="left:561px;top:98px;width:1px;height:20px;background:#404040;"></div><div style="left:529px;top:116px;width:32px;height:1px;background:#808080;"></div><div style="left:560px;top:99px;width:1px;height:18px;background:#808080;"></div><div class="t c" style="left:527px;top:102px;width:34px">Up</div><div style="left:562px;top:98px;width:35px;height:20px;background:#d4d0c8;"></div><div style="left:562px;top:98px;width:35px;height:1px;background:#ffffff;"></div><div style="left:562px;top:98px;width:1px;height:20px;background:#ffffff;"></div><div style="left:562px;top:117px;width:35px;height:1px;background:#404040;"></div><div style="left:596px;top:98px;width:1px;height:20px;background:#404040;"></div><div style="left:563px;top:116px;width:33px;height:1px;background:#808080;"></div><div style="left:595px;top:99px;width:1px;height:18px;background:#808080;"></div><div class="t c" style="left:562px;top:102px;width:35px">Down</div><div style="left:494px;top:119px;width:116px;height:32px;background:#ffffff;"></div><div style="left:494px;top:119px;width:116px;height:1px;background:#808080;"></div><div style="left:494px;top:119px;width:1px;height:32px;background:#808080;"></div><div style="left:495px;top:120px;width:114px;height:1px;background:#404040;"></div><div style="left:495px;top:120px;width:1px;height:30px;background:#404040;"></div><div style="left:494px;top:150px;width:116px;height:1px;background:#ffffff;"></div><div style="left:609px;top:119px;width:1px;height:32px;background:#ffffff;"></div><div style="left:495px;top:149px;width:114px;height:1px;background:#d4d0c8;"></div><div style="left:608px;top:120px;width:1px;height:30px;background:#d4d0c8;"></div><div class="t" style="left:499px;top:123px;letter-spacing:0.091px;">servlet-name</div><div class="t" style="left:484px;top:158px;letter-spacing:-0.500px;">Value</div><div style="left:494px;top:176px;width:116px;height:53px;background:#ffffff;"></div><div style="left:494px;top:176px;width:116px;height:1px;background:#808080;"></div><div style="left:494px;top:176px;width:1px;height:53px;background:#808080;"></div><div style="left:495px;top:177px;width:114px;height:1px;background:#404040;"></div><div style="left:495px;top:177px;width:1px;height:51px;background:#404040;"></div><div style="left:494px;top:228px;width:116px;height:1px;background:#ffffff;"></div><div style="left:609px;top:176px;width:1px;height:53px;background:#ffffff;"></div><div style="left:495px;top:227px;width:114px;height:1px;background:#d4d0c8;"></div><div style="left:608px;top:177px;width:1px;height:51px;background:#d4d0c8;"></div><div class="t" style="left:499px;top:180px;letter-spacing:-0.286px;">cofaxCDS</div><div class="t" style="left:483px;top:240px;letter-spacing:-0.050px;">Comment - before node</div><div style="left:494px;top:256px;width:116px;height:53px;background:#ffffff;"></div><div style="left:494px;top:256px;width:116px;height:1px;background:#808080;"></div><div style="left:494px;top:256px;width:1px;height:53px;background:#808080;"></div><div style="left:495px;top:257px;width:114px;height:1px;background:#404040;"></div><div style="left:495px;top:257px;width:1px;height:51px;background:#404040;"></div><div style="left:494px;top:308px;width:116px;height:1px;background:#ffffff;"></div><div style="left:609px;top:256px;width:1px;height:53px;background:#ffffff;"></div><div style="left:495px;top:307px;width:114px;height:1px;background:#d4d0c8;"></div><div style="left:608px;top:257px;width:1px;height:51px;background:#d4d0c8;"></div><div class="t" style="left:483px;top:314px;letter-spacing:-0.222px;">Comment - same line</div><div style="left:494px;top:331px;width:116px;height:52px;background:#ffffff;"></div><div style="left:494px;top:331px;width:116px;height:1px;background:#808080;"></div><div style="left:494px;top:331px;width:1px;height:52px;background:#808080;"></div><div style="left:495px;top:332px;width:114px;height:1px;background:#404040;"></div><div style="left:495px;top:332px;width:1px;height:50px;background:#404040;"></div><div style="left:494px;top:382px;width:116px;height:1px;background:#ffffff;"></div><div style="left:609px;top:331px;width:1px;height:52px;background:#ffffff;"></div><div style="left:495px;top:381px;width:114px;height:1px;background:#d4d0c8;"></div><div style="left:608px;top:332px;width:1px;height:50px;background:#d4d0c8;"></div><div style="left:4px;top:393px;width:615px;height:1px;background:#808080;"></div><div style="left:4px;top:393px;width:1px;height:17px;background:#808080;"></div><div style="left:4px;top:409px;width:602px;height:1px;background:#ffffff;"></div><div style="left:618px;top:393px;width:1px;height:4px;background:#ffffff;"></div><div style="left:606px;top:408px;width:1px;height:1px;background:#ffffff;"></div><div style="left:607px;top:407px;width:1px;height:1px;background:#ffffff;"></div><div style="left:607px;top:408px;width:1px;height:1px;background:#808080;"></div><div style="left:608px;top:406px;width:1px;height:1px;background:#ffffff;"></div><div style="left:608px;top:407px;width:1px;height:1px;background:#808080;"></div><div style="left:608px;top:408px;width:1px;height:1px;background:#808080;"></div><div style="left:609px;top:405px;width:1px;height:1px;background:#ffffff;"></div><div style="left:609px;top:406px;width:1px;height:1px;background:#808080;"></div><div style="left:609px;top:407px;width:1px;height:1px;background:#808080;"></div><div style="left:610px;top:404px;width:1px;height:1px;background:#ffffff;"></div><div style="left:610px;top:405px;width:1px;height:1px;background:#808080;"></div><div style="left:610px;top:406px;width:1px;height:1px;background:#808080;"></div><div style="left:610px;top:408px;width:1px;height:1px;background:#ffffff;"></div><div style="left:611px;top:403px;width:1px;height:1px;background:#ffffff;"></div><div style="left:611px;top:404px;width:1px;height:1px;background:#808080;"></div><div style="left:611px;top:405px;width:1px;height:1px;background:#808080;"></div><div style="left:611px;top:407px;width:1px;height:1px;background:#ffffff;"></div><div style="left:611px;top:408px;width:1px;height:1px;background:#808080;"></div><div style="left:612px;top:402px;width:1px;height:1px;background:#ffffff;"></div><div style="left:612px;top:403px;width:1px;height:1px;background:#808080;"></div><div style="left:612px;top:404px;width:1px;height:1px;background:#808080;"></div><div style="left:612px;top:406px;width:1px;height:1px;background:#ffffff;"></div><div style="left:612px;top:407px;width:1px;height:1px;background:#808080;"></div><div style="left:612px;top:408px;width:1px;height:1px;background:#808080;"></div><div style="left:613px;top:401px;width:1px;height:1px;background:#ffffff;"></div><div style="left:613px;top:402px;width:1px;height:1px;background:#808080;"></div><div style="left:613px;top:403px;width:1px;height:1px;background:#808080;"></div><div style="left:613px;top:405px;width:1px;height:1px;background:#ffffff;"></div><div style="left:613px;top:406px;width:1px;height:1px;background:#808080;"></div><div style="left:613px;top:407px;width:1px;height:1px;background:#808080;"></div><div style="left:614px;top:400px;width:1px;height:1px;background:#ffffff;"></div><div style="left:614px;top:401px;width:1px;height:1px;background:#808080;"></div><div style="left:614px;top:402px;width:1px;height:1px;background:#808080;"></div><div style="left:614px;top:404px;width:1px;height:1px;background:#ffffff;"></div><div style="left:614px;top:405px;width:1px;height:1px;background:#808080;"></div><div style="left:614px;top:406px;width:1px;height:1px;background:#808080;"></div><div style="left:614px;top:408px;width:1px;height:1px;background:#ffffff;"></div><div style="left:615px;top:399px;width:1px;height:1px;background:#ffffff;"></div><div style="left:615px;top:400px;width:1px;height:1px;background:#808080;"></div><div style="left:615px;top:401px;width:1px;height:1px;background:#808080;"></div><div style="left:615px;top:403px;width:1px;height:1px;background:#ffffff;"></div><div style="left:615px;top:404px;width:1px;height:1px;background:#808080;"></div><div style="left:615px;top:405px;width:1px;height:1px;background:#808080;"></div><div style="left:615px;top:407px;width:1px;height:1px;background:#ffffff;"></div><div style="left:615px;top:408px;width:1px;height:1px;background:#808080;"></div><div style="left:616px;top:398px;width:1px;height:1px;background:#ffffff;"></div><div style="left:616px;top:399px;width:1px;height:1px;background:#808080;"></div><div style="left:616px;top:400px;width:1px;height:1px;background:#808080;"></div><div style="left:616px;top:402px;width:1px;height:1px;background:#ffffff;"></div><div style="left:616px;top:403px;width:1px;height:1px;background:#808080;"></div><div style="left:616px;top:404px;width:1px;height:1px;background:#808080;"></div><div style="left:616px;top:406px;width:1px;height:1px;background:#ffffff;"></div><div style="left:616px;top:407px;width:1px;height:1px;background:#808080;"></div><div style="left:616px;top:408px;width:1px;height:1px;background:#808080;"></div><div style="left:617px;top:397px;width:1px;height:1px;background:#ffffff;"></div><div style="left:617px;top:398px;width:1px;height:1px;background:#808080;"></div><div style="left:617px;top:399px;width:1px;height:1px;background:#808080;"></div><div style="left:617px;top:401px;width:1px;height:1px;background:#ffffff;"></div><div style="left:617px;top:402px;width:1px;height:1px;background:#808080;"></div><div style="left:617px;top:403px;width:1px;height:1px;background:#808080;"></div><div style="left:617px;top:405px;width:1px;height:1px;background:#ffffff;"></div><div style="left:617px;top:406px;width:1px;height:1px;background:#808080;"></div><div style="left:617px;top:407px;width:1px;height:1px;background:#808080;"></div><div style="left:251px;top:123px;width:226px;height:289px;background:#d4d0c8"></div><div style="left:252px;top:124px;width:224px;height:1px;background:#ffffff"></div><div style="left:252px;top:124px;width:1px;height:287px;background:#ffffff"></div><div style="left:251px;top:411px;width:226px;height:1px;background:#404040"></div><div style="left:476px;top:123px;width:1px;height:289px;background:#404040"></div><div style="left:252px;top:410px;width:224px;height:1px;background:#808080"></div><div style="left:475px;top:124px;width:1px;height:287px;background:#808080"></div><div class="t" style="left:271px;top:128px;letter-spacing:-0.200px;">Add sibling</div><div class="t" style="left:422px;top:128px;letter-spacing:0.000px;">Ctrl+B</div><div class="t" style="left:271px;top:145px;letter-spacing:-0.250px;">Add child</div><div class="t" style="left:422px;top:145px;letter-spacing:0.400px;">Ctrl+H</div><div style="left:255px;top:163px;width:218px;height:1px;background:#808080"></div><div style="left:255px;top:164px;width:218px;height:1px;background:#ffffff"></div><div class="t" style="left:270px;top:171px;">Copy node</div><div class="t" style="left:422px;top:171px;letter-spacing:0.200px;">Ctrl+C</div><div class="t" style="left:270px;top:188px;letter-spacing:-0.154px;">Duplicate node</div><div class="t" style="left:422px;top:188px;letter-spacing:0.400px;">Ctrl+D</div><div class="t" style="left:270px;top:205px;letter-spacing:-0.143px;">Paste as child from clipboard</div><div class="t" style="left:422px;top:205px;letter-spacing:0.200px;">Ctrl+V</div><div class="t" style="left:270px;top:222px;letter-spacing:-0.167px;">Paste as sibling from clipboard</div><div class="t" style="left:270px;top:239px;letter-spacing:-0.037px;">Paste as root from clipboard</div><div style="left:255px;top:257px;width:218px;height:1px;background:#808080"></div><div style="left:255px;top:258px;width:218px;height:1px;background:#ffffff"></div><div style="left:254px;top:263px;width:220px;height:17px;background:#0a246a"></div><div class="t" style="left:271px;top:265px;color:#fff;letter-spacing:0.071px;">Array generator</div><div style="left:464px;top:267px;width:1px;height:7px;background:#fff"></div><div style="left:465px;top:268px;width:1px;height:5px;background:#fff"></div><div style="left:466px;top:269px;width:1px;height:3px;background:#fff"></div><div style="left:467px;top:270px;width:1px;height:1px;background:#fff"></div><div style="left:255px;top:283px;width:218px;height:1px;background:#808080"></div><div style="left:255px;top:284px;width:218px;height:1px;background:#ffffff"></div><div class="t" style="left:270px;top:291px;letter-spacing:0.333px;">Find...</div><div class="t" style="left:422px;top:291px;letter-spacing:0.400px;">Ctrl+F</div><div class="t" style="left:271px;top:309px;color:#fff">Find Next</div><div class="t" style="left:270px;top:308px;color:#808080">Find Next</div><div class="t" style="left:423px;top:309px;color:#fff">F3</div><div class="t" style="left:422px;top:308px;color:#808080">F3</div><div style="left:255px;top:326px;width:218px;height:1px;background:#808080"></div><div style="left:255px;top:327px;width:218px;height:1px;background:#ffffff"></div><div class="t" style="left:270px;top:334px;">Expand</div><div style="left:464px;top:336px;width:1px;height:7px;background:#000"></div><div style="left:465px;top:337px;width:1px;height:5px;background:#000"></div><div style="left:466px;top:338px;width:1px;height:3px;background:#000"></div><div style="left:467px;top:339px;width:1px;height:1px;background:#000"></div><div class="t" style="left:270px;top:351px;letter-spacing:-0.182px;">Collapse all</div><div style="left:255px;top:369px;width:218px;height:1px;background:#808080"></div><div style="left:255px;top:370px;width:218px;height:1px;background:#ffffff"></div><div class="t" style="left:270px;top:377px;letter-spacing:-0.053px;">Delete selected node</div><div class="t" style="left:270px;top:394px;letter-spacing:-0.069px;">Delete all siblings after node</div><div style="left:471px;top:260px;width:136px;height:57px;background:#d4d0c8"></div><div style="left:472px;top:261px;width:134px;height:1px;background:#ffffff"></div><div style="left:472px;top:261px;width:1px;height:55px;background:#ffffff"></div><div style="left:471px;top:316px;width:136px;height:1px;background:#404040"></div><div style="left:606px;top:260px;width:1px;height:57px;background:#404040"></div><div style="left:472px;top:315px;width:134px;height:1px;background:#808080"></div><div style="left:605px;top:261px;width:1px;height:55px;background:#808080"></div><div class="t" style="left:490px;top:265px;letter-spacing:-0.176px;">Clone node N times</div><div class="t" style="left:490px;top:282px;letter-spacing:-0.133px;">Scripted cloning</div><div class="t" style="left:490px;top:299px;letter-spacing:-0.333px;">CSV import</div>
</body></html>
